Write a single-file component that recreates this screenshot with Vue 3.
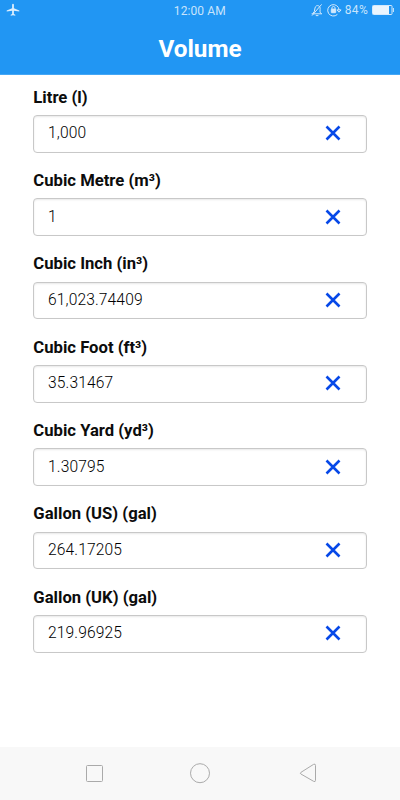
<script setup>
import { ref } from 'vue'

const units = ref([
  { label: 'Litre (l)', value: '1,000' },
  { label: 'Cubic Metre (m³)', value: '1' },
  { label: 'Cubic Inch (in³)', value: '61,023.74409' },
  { label: 'Cubic Foot (ft³)', value: '35.31467' },
  { label: 'Cubic Yard (yd³)', value: '1.30795' },
  { label: 'Gallon (US) (gal)', value: '264.17205' },
  { label: 'Gallon (UK) (gal)', value: '219.96925' }
])
</script>

<template>
  <div class="screen">
    <header class="header">
      <div class="status">
        <div class="side">
          <svg class="plane" width="14" height="14" viewBox="0 0 14 14">
            <path d="M6.1 1.7C6.1 .5 7.9 .5 7.9 1.7V5.2L13.3 7.4V8.4L7.9 7.7V10.9L9.3 11.8V12.7L7 12.3L4.7 12.7V11.8L6.1 10.9V7.7L.7 8.4V7.4L6.1 5.2Z" />
          </svg>
        </div>
        <span class="clock">12:00 AM</span>
        <div class="side right">
          <svg class="bell" width="12" height="14" viewBox="0 0 12 14">
            <path d="M.6 10.8H11M1.8 10.5L3.3 8.5L4 5C4.5 2.9 6 2.2 7.5 2.8C9 3.4 9.3 4.8 9.1 6.5L9 9.1L10.4 10.8M4.8 12.6H7.4M1 12.6L10.6 1.4" />
          </svg>
          <svg class="lock" width="15" height="14" viewBox="0 0 15 14">
            <path d="M10.4 11.4A5.7 5.7 0 1 1 12.1 7M10 6.9H14.1L12 9.2Z" />
            <path d="M4.9 6.1V4.9C4.9 3 8.1 3 8.1 4.9V6.1" />
            <rect x="4.3" y="6.1" width="4.4" height="3.6" rx=".4" />
          </svg>
          <span class="percent">84%</span>
          <svg class="battery" width="23" height="10" viewBox="0 0 23 10">
            <rect x=".5" y=".5" width="19.5" height="9" rx=".8" />
            <rect class="charge" x="1" y="1" width="16" height="8" />
            <path d="M21.4 3V7" />
          </svg>
        </div>
      </div>
      <h1>Volume</h1>
    </header>

    <main class="units">
      <div v-for="unit in units" :key="unit.label" class="unit">
        <label>{{ unit.label }}</label>
        <div class="field">
          <span>{{ unit.value }}</span>
          <svg width="16" height="16" viewBox="0 0 16 16" @click="unit.value = ''">
            <path d="M1.5 1.5L14.5 14.5M14.5 1.5L1.5 14.5" />
          </svg>
        </div>
      </div>
    </main>

    <nav class="nav">
      <svg width="20" height="22" viewBox="0 0 20 22"><rect x="2.5" y="3.5" width="16" height="16" rx="1" /></svg>
      <svg width="22" height="22" viewBox="0 0 22 22"><circle cx="11" cy="11.2" r="9.5" /></svg>
      <svg width="20" height="22" viewBox="0 0 20 22"><path d="M2.9 10.4L15.5 2.4Q17.5 1.4 17.5 3.4V18.4Q17.5 20.3 15.6 19.3L2.9 12Q1.7 11.2 2.9 10.4Z" /></svg>
    </nav>
  </div>
</template>

<style>
body {
  margin: 0;
}
</style>

<style scoped>
.screen {
  display: flex;
  flex-direction: column;
  width: 400px;
  height: 800px;
  overflow: hidden;
  background: #fff;
  font-family: Roboto, sans-serif;
}
svg {
  display: block;
  fill: none;
}
.header {
  box-sizing: border-box;
  height: 75px;
  flex: none;
  background: #2196f3;
  border-bottom: 1px solid #45a7f5;
}
.status {
  display: flex;
  align-items: center;
  height: 20px;
  padding: 0 5px 0 6px;
  color: #c8e4fc;
  font-size: 12px;
}
.side {
  display: flex;
  flex: 1;
  align-items: center;
}
.right {
  justify-content: flex-end;
}
.plane {
  fill: #dceefd;
}
.clock {
  padding: 1px 1.4px 0 0;
  letter-spacing: 0.1px;
}
.bell,
.lock,
.battery {
  stroke: #d3e9fc;
  stroke-width: 1;
}
.bell {
  margin-right: 4px;
}
.lock {
  margin-right: 3px;
}
.lock rect {
  fill: #d3e9fc;
}
.percent {
  margin-right: 4px;
  letter-spacing: 0.3px;
}
.battery .charge {
  fill: #eaf5fe;
  stroke: none;
}
h1 {
  margin: 13px 0 0;
  color: #fff;
  font-size: 24.3px;
  line-height: 32px;
  font-weight: 700;
  text-align: center;
}
.units {
  flex: 1;
  padding: 11px 33.33px 0;
}
.unit {
  height: 83.33px;
}
label {
  display: block;
  box-sizing: border-box;
  height: 29px;
  padding-top: 0.7px;
  color: #0c0c0c;
  font-size: 16.67px;
  line-height: 22px;
  font-weight: 700;
}
.field {
  display: flex;
  box-sizing: border-box;
  align-items: center;
  justify-content: space-between;
  height: 37.8px;
  padding: 0 24.5px 1.2px 13.7px;
  border: 1px solid #c8c8c8;
  border-radius: 4px;
  box-shadow: inset 0 1px 2px #e8e8e8;
  color: #000;
  font-size: 15.6px;
  font-weight: 300;
  letter-spacing: 0.12px;
}
.field svg {
  stroke: #0648e8;
  stroke-width: 2.6;
}
.nav {
  display: flex;
  flex: none;
  align-items: center;
  justify-content: space-between;
  height: 53px;
  box-sizing: border-box;
  padding: 0 82px 1px 84px;
  background: #f8f8f8;
}
.nav svg:nth-child(2) {
  margin-right: 2px;
}
.nav svg {
  stroke: #aaa;
  stroke-width: 1;
}
</style>
